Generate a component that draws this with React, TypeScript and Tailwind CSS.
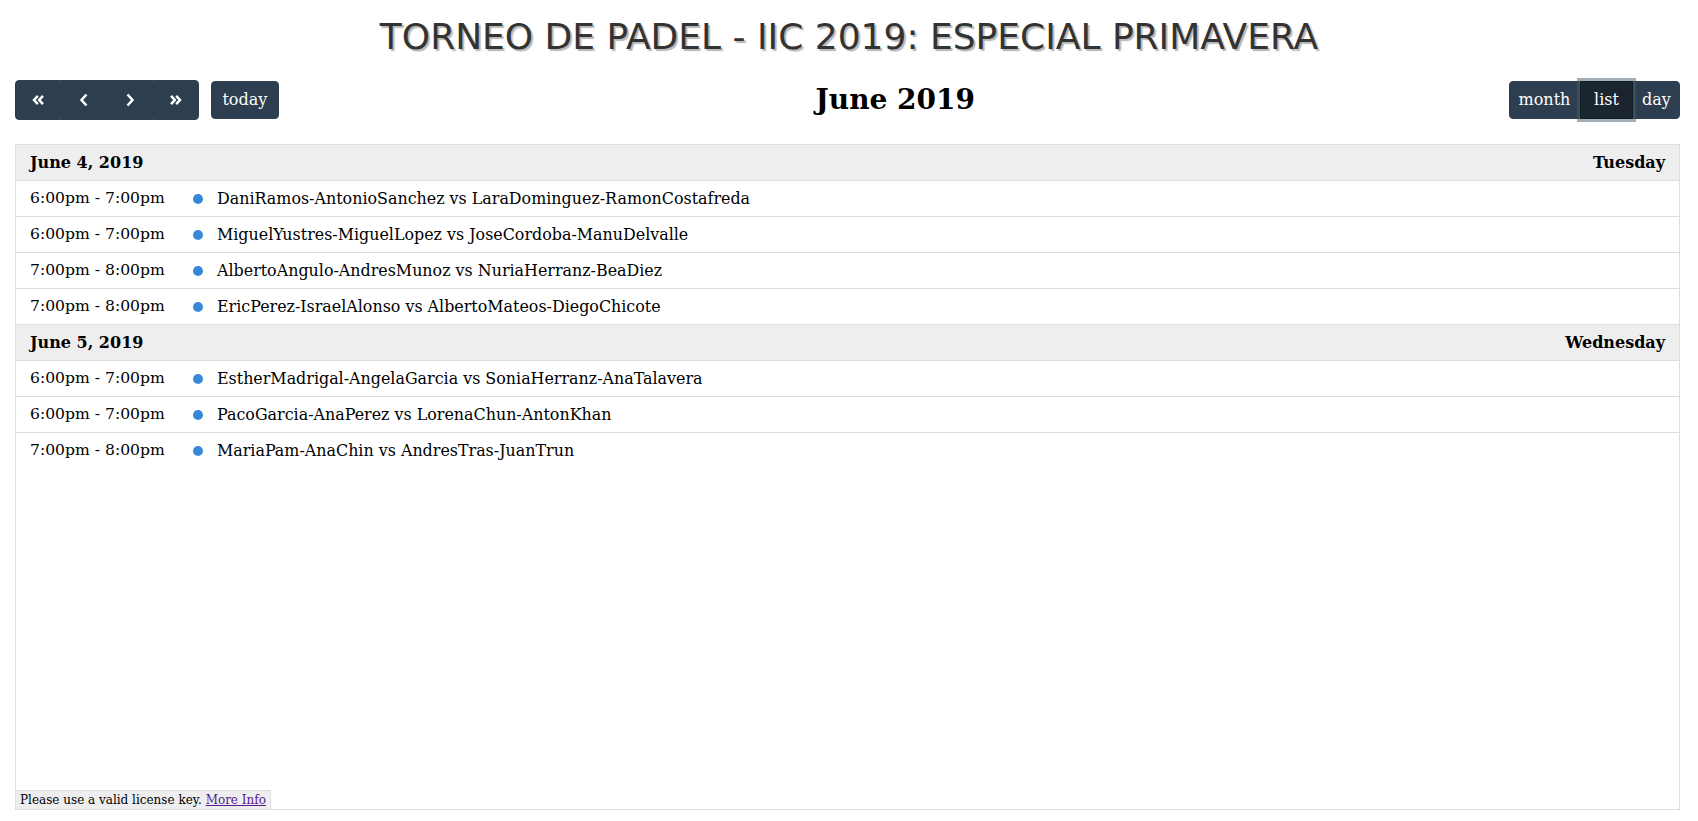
import React from "react";

type Ev = [string, string];
const days: { date: string; dow: string; events: Ev[] }[] = [
  {
    date: "June 4, 2019",
    dow: "Tuesday",
    events: [
      ["6:00pm - 7:00pm", "DaniRamos-AntonioSanchez vs LaraDominguez-RamonCostafreda"],
      ["6:00pm - 7:00pm", "MiguelYustres-MiguelLopez vs JoseCordoba-ManuDelvalle"],
      ["7:00pm - 8:00pm", "AlbertoAngulo-AndresMunoz vs NuriaHerranz-BeaDiez"],
      ["7:00pm - 8:00pm", "EricPerez-IsraelAlonso vs AlbertoMateos-DiegoChicote"],
    ],
  },
  {
    date: "June 5, 2019",
    dow: "Wednesday",
    events: [
      ["6:00pm - 7:00pm", "EstherMadrigal-AngelaGarcia vs SoniaHerranz-AnaTalavera"],
      ["6:00pm - 7:00pm", "PacoGarcia-AnaPerez vs LorenaChun-AntonKhan"],
      ["7:00pm - 8:00pm", "MariaPam-AnaChin vs AndresTras-JuanTrun"],
    ],
  },
];

function Chevron({ dir, double }: { dir: "l" | "r"; double?: boolean }) {
  const paths = double
    ? dir === "l"
      ? ["M11.8 7.8 L8 12 L11.8 16.2", "M17 7.8 L13.2 12 L17 16.2"]
      : ["M7 7.8 L10.8 12 L7 16.2", "M12.2 7.8 L16 12 L12.2 16.2"]
    : dir === "l"
    ? ["M14.5 6.5 L9.5 12 L14.5 17.5"]
    : ["M9.5 6.5 L14.5 12 L9.5 17.5"];
  return (
    <svg width="24" height="24" viewBox="0 0 24 24" fill="none" stroke="white" strokeWidth="2.5" strokeLinecap="butt" strokeLinejoin="miter">
      {paths.map((d, i) => (
        <path key={i} d={d} />
      ))}
    </svg>
  );
}

export default function App() {
  const navBtn =
    "w-[46px] h-[40px] flex items-center justify-center bg-[#2c3e50] border border-[#2c3e50]";
  const txtBtn =
    "bg-[#2c3e50] border border-[#2c3e50] text-white text-[16px] leading-[24px] py-[6.4px] text-center";
  return (
    <div className="w-[1698px] h-[821px] bg-white font-['DejaVu_Serif',serif] text-black text-[16px]">
      <h1 className="pt-[16px] mb-[22px] text-center font-['DejaVu_Sans',sans-serif] text-[36px] leading-[42px] font-normal text-[#333333] [text-shadow:2px_2px_1px_#b8b8b8]">
        TORNEO DE PADEL - IIC 2019: ESPECIAL PRIMAVERA
      </h1>

      <div className="ml-[15px] mr-[18px] h-[40px] mb-[24px] flex items-center justify-between">
        <div className="flex items-center gap-[12px]">
          <div className="flex">
            <div className={navBtn + " rounded-l-[4px]"}>
              <Chevron dir="l" double />
            </div>
            <div className={navBtn}>
              <Chevron dir="l" />
            </div>
            <div className={navBtn}>
              <Chevron dir="r" />
            </div>
            <div className={navBtn + " rounded-r-[4px]"}>
              <Chevron dir="r" double />
            </div>
          </div>
          <div className={txtBtn + " px-[10.4px] rounded-[4px]"}>today</div>
        </div>
        <h2 className="text-[28px] font-bold leading-normal m-0 pl-[3px]">June 2019</h2>
        <div className="flex">
          <div className={txtBtn + " w-[71px] rounded-l-[4px]"}>month</div>
          <div className="relative z-10 w-[53px] text-center bg-[#1a252f] border border-[#151e27] text-white text-[16px] leading-[24px] py-[6.4px] shadow-[0_0_0_3px_rgba(76,91,106,0.5)]">
            list
          </div>
          <div className={txtBtn + " w-[47px] rounded-r-[4px]"}>day</div>
        </div>
      </div>

      <div className="relative ml-[15px] mr-[18px] h-[666px] border border-[#dddddd]">
        {days.map((d, di) => (
          <div key={di}>
            <div
              className={
                "flex justify-between bg-[#eeeeee] px-[14px] py-[8px] leading-[19px] font-bold" +
                (di > 0 ? " border-t border-[#dddddd]" : "")
              }
            >
              <span>{d.date}</span>
              <span>{d.dow}</span>
            </div>
            {d.events.map((e, ei) => (
              <div key={ei} className="flex items-center border-t border-[#dddddd] py-[8px] leading-[19px]">
                <div className="w-[163px] shrink-0 pl-[14px] whitespace-nowrap text-[15.6px]">{e[0]}</div>
                <div className="pl-[14px] flex items-center">
                  <span className="inline-block w-[10px] h-[10px] rounded-full bg-[#3788d8]" />
                </div>
                <div className="px-[14px] whitespace-nowrap text-[15.9px]">{e[1]}</div>
              </div>
            ))}
          </div>
        ))}
        <div className="absolute bottom-0 left-0 bg-[#eeeeee] border-t border-r border-[#dddddd] px-[4px] py-[2px] text-[12px] leading-[14px] text-black">
          Please use a valid license key.{" "}
          <a href="#" className="underline text-[#551a8b]">
            More Info
          </a>
        </div>
      </div>
    </div>
  );
}
